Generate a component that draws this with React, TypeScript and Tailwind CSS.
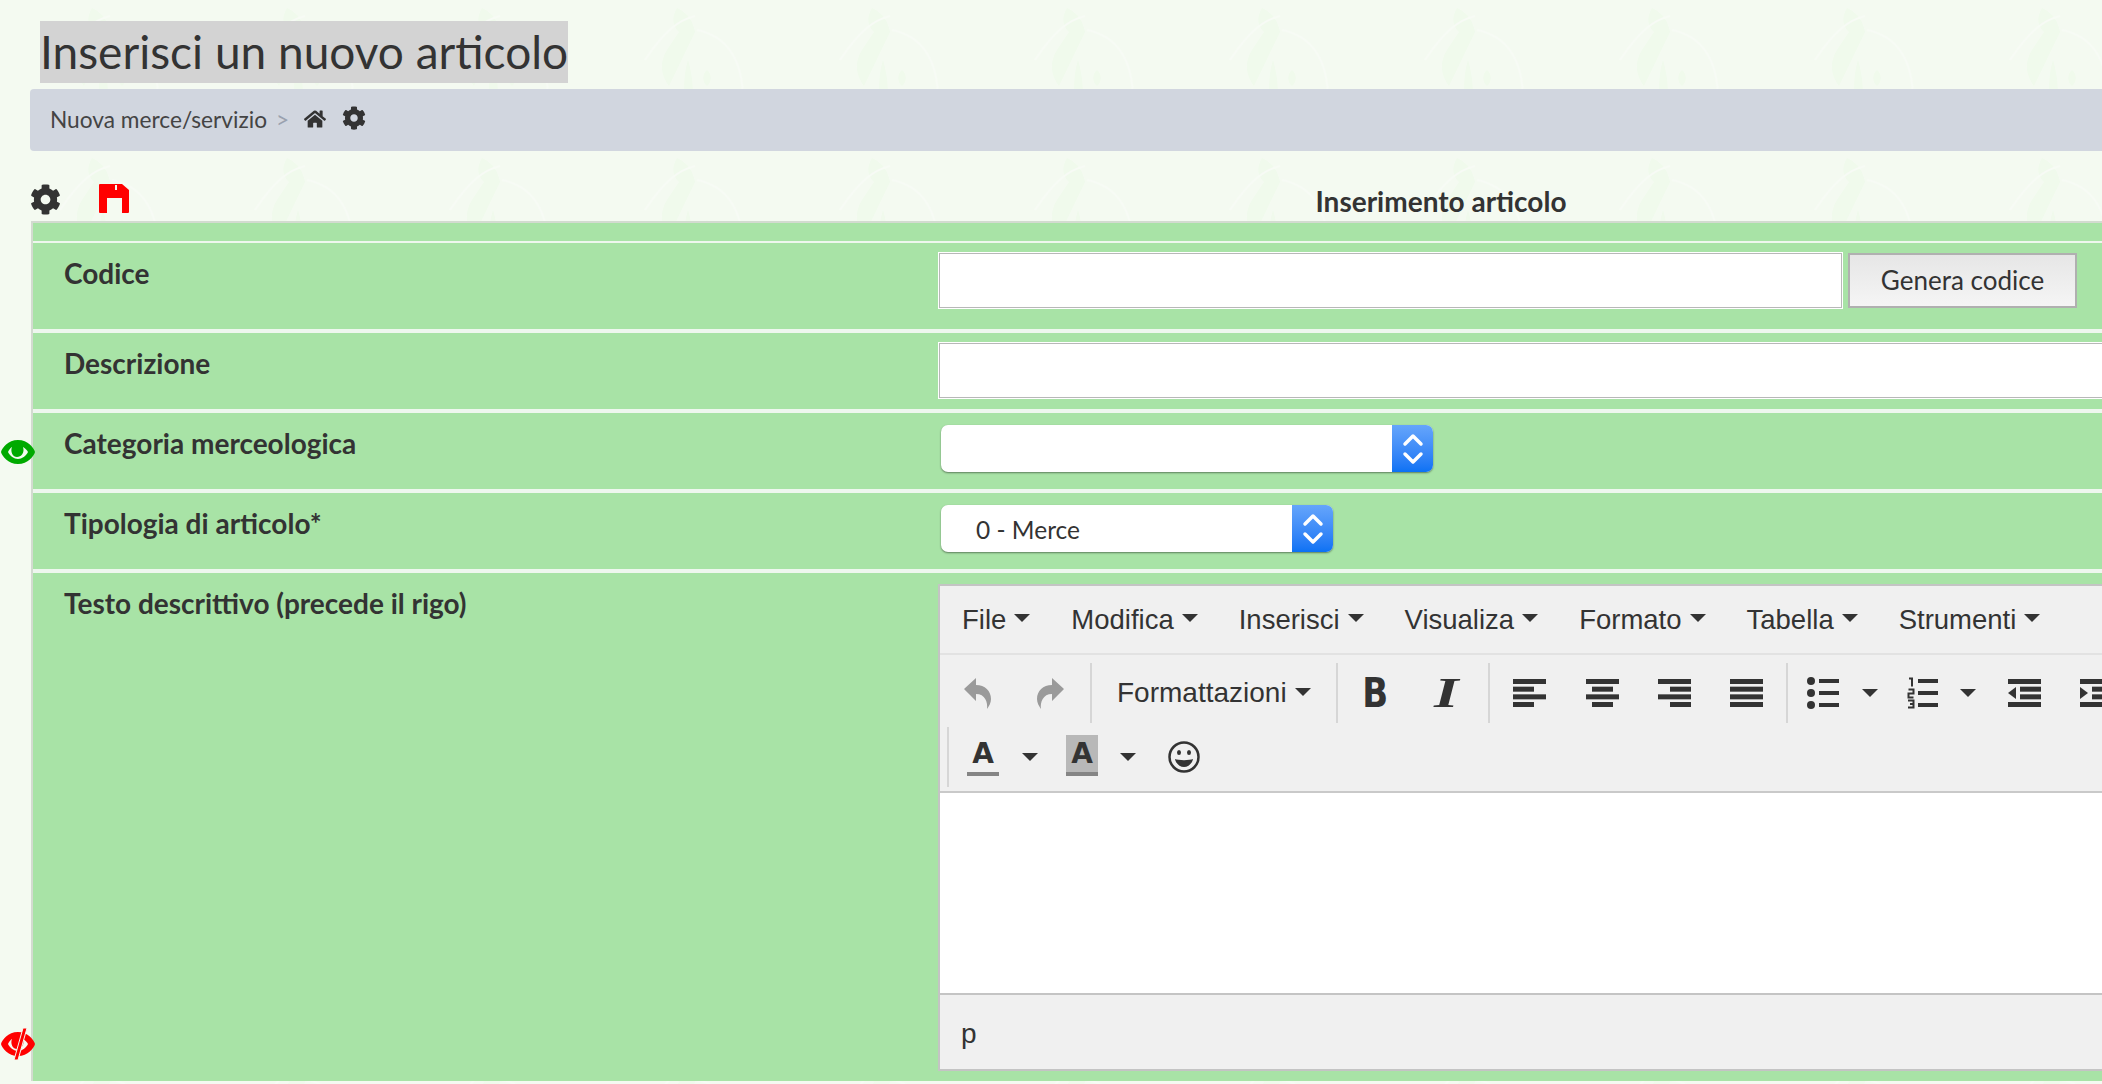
import React from "react";
import { FaCog, FaHome } from "react-icons/fa";

const Caret = ({ className = "" }: { className?: string }) => (
  <span className={`inline-block w-0 h-0 shrink-0 border-x-[8px] border-x-transparent border-t-[8px] border-t-[#333] ${className}`} />
);

const MenuItem = ({ label }: { label: string }) => (
  <span className="flex items-center">
    <span>{label}</span>
    <Caret className="ml-[8px] mb-[3px]" />
  </span>
);

const Sep = ({ className = "" }: { className?: string }) => <span className={`block w-[2px] h-[60px] bg-[#d6d6d6] shrink-0 ${className}`} />;

const Lines = ({ rows }: { rows: [number, number][] }) => (
  <svg width="33" height="28" viewBox="0 0 33 28" fill="#333" className="block">
    {rows.map(([x, w], i) => (
      <rect key={i} x={x} y={i * 7.67} width={w} height="5" />
    ))}
  </svg>
);

const Slot = ({ children, className = "w-[73px]" }: { children: React.ReactNode; className?: string }) => (
  <span className={`flex items-center justify-center shrink-0 h-[60px] ${className}`}>{children}</span>
);

const Undo = ({ flip = false }: { flip?: boolean }) => (
  <svg width="27" height="31" viewBox="0 0 27 31" fill="#9a9a9a" className={flip ? "-scale-x-100" : ""}>
    <path d="M0 11 12 0v7c9 0 15 6 15 14 0 4-2 7-4 10 1-7-2-15-11-15v7z" />
  </svg>
);

const Chevrons = () => (
  <svg width="22" height="36" viewBox="0 0 22 36" fill="none" stroke="#fff" strokeWidth="3.500" strokeLinecap="round" strokeLinejoin="round">
    <path d="M3 13 11 5l8 8M3 23l8 8 8-8" />
  </svg>
);

const SelectBox = ({ width, text }: { width: string; text?: string }) => (
  <div className={`flex h-[47px] ml-[3px] rounded-[7px] bg-white overflow-hidden shadow-[0_1px_2px_rgba(0,0,0,0.45)] ${width}`}>
    <div className="flex-1 flex items-center pl-[35px] pt-[3px] text-[24.5px] text-[#333]">{text}</div>
    <div className="w-[41px] flex items-center justify-center bg-gradient-to-b from-[#65a5fb] to-[#0a72f4]">
      <Chevrons />
    </div>
  </div>
);

const Row = ({ label, h, children }: { label: string; h: string; children: React.ReactNode }) => (
  <div className={`flex bg-[#a8e3a6] ${h}`}>
    <div className="w-[905px] shrink-0 pl-[31px] pt-[12px] text-[28px] leading-[36px] font-bold text-[#333]">{label}</div>
    <div className="flex-1 min-w-0 pt-[10px] pr-[20px]">{children}</div>
  </div>
);

const inputCls = "h-[55px] ml-[1px] bg-white border border-[#b8b8b8] shadow-[0_0_0_1px_#fff]";

export default function App() {
  return (
    <div className="relative w-full h-[1084px] overflow-hidden bg-[#f4faf1] text-[#333] font-['Lato','Noto_Sans',sans-serif]">
      <svg className="absolute inset-0 w-full h-full" aria-hidden="true">
        <defs>
          <pattern id="bgleaf" x="0" y="0" width="195" height="150" patternUnits="userSpaceOnUse">
            <g fill="#f0faec">
              <path d="M92 8c12 6 16 14 18 24l-26 54c-10-14-8-26-2-36l12-18c-6-6-8-14-2-24z" />
              <path d="M103 60c6 20 6 40 3 64-8-22-9-44-3-64z" />
              <path d="M122 70c5 4 5 12 0 16-5-4-5-12 0-16z" />
            </g>
            <path d="M112 30c30 6 46 30 46 70M150 90c-10 20-14 30-20 44M60 60c20-30 34-40 50-44" fill="none" stroke="#f7fbf5" strokeWidth="2" />
          </pattern>
        </defs>
        <rect width="100%" height="100%" fill="url(#bgleaf)" />
      </svg>

      <div className="relative">
        <div className="pt-[21px] pl-[40px]">
          <h1 className="inline-block align-top h-[62px] bg-[#d3d3d3] text-[46px] leading-[62px] font-normal whitespace-nowrap">Inserisci un nuovo articolo</h1>
        </div>

        <div className="ml-[30px] mt-[6px] h-[62px] bg-[#d1d6df] rounded-l-[4px] flex items-center pl-[20px] text-[22.7px]">
          <span className="text-[#444]">Nuova merce/servizio</span>
          <span className="ml-[9px] text-[#9aa1ae]">&gt;</span>
          <FaHome className="ml-[15px] text-[#333] mb-[3px]" size={22} />
          <FaCog className="ml-[16px] text-[#333] mb-[5px]" size={24} />
        </div>

        <div className="ml-[31px] w-[2820px] h-[70px] grid grid-cols-[1fr_auto_1fr]">
          <div className="flex items-start pt-[33px] -ml-[1px]">
            <FaCog className="text-[#333]" size={31} />
            <svg className="ml-[38px]" width="30" height="29" viewBox="0 0 30 29">
              <path
                fill="#f00"
                fillRule="evenodd"
                d="M1 0h22l7 6v22a1 1 0 0 1-1 1h-6V14H8v15H1a1 1 0 0 1-1-1V1a1 1 0 0 1 1-1zM16 1v5h2V1z"
              />
            </svg>
          </div>
          <div className="pt-[34px] text-[28px] leading-[32px] font-bold whitespace-nowrap">Inserimento articolo</div>
          <div />
        </div>

        <div className="ml-[31px] w-[2820px] border-t-2 border-l-2 border-[#d3dbd0] bg-[#eef7ee] flex flex-col">
          <div className="h-[18px] bg-[#a8e3a6]" />
          <div className="mt-[2px] flex flex-col gap-[4px]">
            <Row label="Codice" h="h-[86px]">
              <div className="flex">
                <div className={`w-[903px] ${inputCls}`} />
                <button className="ml-[6px] w-[229px] h-[55px] border-2 border-[#b0b0b0] bg-gradient-to-b from-[#e6e6e6] to-[#f5f5f5] text-[26px] text-[#333]">Genera codice</button>
              </div>
            </Row>
            <Row label="Descrizione" h="h-[76px]">
              <div className={inputCls} />
            </Row>
            <Row label="Categoria merceologica" h="h-[76px]">
              <div className="pt-[2px]">
                <SelectBox width="w-[492px]" />
              </div>
            </Row>
            <Row label="Tipologia di articolo*" h="h-[76px]">
              <div className="pt-[2px]">
                <SelectBox width="w-[392px]" text="0 - Merce" />
              </div>
            </Row>
            <Row label="Testo descrittivo (precede il rigo)" h="h-[508px]">
              <div className="mt-[1px] border-2 border-[#c4c4c4] font-['Liberation_Sans',sans-serif]">
                <div className="h-[67px] bg-[#f0f0f0] flex items-center gap-[41px] pl-[22px] text-[27.5px] text-[#333] whitespace-nowrap">
                  {["File", "Modifica", "Inserisci", "Visualiza", "Formato", "Tabella", "Strumenti"].map((m) => (
                    <MenuItem key={m} label={m} />
                  ))}
                </div>
                <div className="h-[138px] bg-[#f0f0f0] border-t-2 border-[#e2e2e2] pt-[8px]">
                  <div className="flex items-center h-[60px] pl-[1px]">
                    <Slot><Undo /></Slot>
                    <Slot><Undo flip /></Slot>
                    <Sep className="ml-[3px]" />
                    <span className="ml-[25px] text-[28px]">Formattazioni</span>
                    <Caret className="ml-[8px] mb-[3px]" />
                    <Sep className="ml-[25px]" />
                    <Slot className="w-[73px] ml-[1px]">
                      <span className="font-['DejaVu_Sans',sans-serif] font-bold text-[40px] leading-none scale-x-[0.85]">B</span>
                    </Slot>
                    <Slot className="w-[73px] -ml-[2px]">
                      <span className="font-['Liberation_Serif',serif] font-bold italic text-[42px] leading-none scale-x-[1.5]">I</span>
                    </Slot>
                    <Sep className="ml-[5px]" />
                    <Slot className="w-[72.3px] ml-[4px]"><Lines rows={[[0, 33], [0, 21], [0, 33], [0, 21]]} /></Slot>
                    <Slot className="w-[72.3px]"><Lines rows={[[0, 33], [6, 21], [0, 33], [6, 21]]} /></Slot>
                    <Slot className="w-[72.3px]"><Lines rows={[[0, 33], [12, 21], [0, 33], [12, 21]]} /></Slot>
                    <Slot className="w-[72.3px]"><Lines rows={[[0, 33], [0, 33], [0, 33], [0, 33]]} /></Slot>
                    <Sep className="ml-[3px]" />
                    <svg className="ml-[19px] shrink-0" width="32" height="32" viewBox="0 0 32 32" fill="#333">
                      <circle cx="4" cy="4" r="4" /><circle cx="4" cy="16" r="4" /><circle cx="4" cy="28" r="4" />
                      <rect x="12" y="2" width="20" height="4" /><rect x="12" y="14" width="20" height="4" /><rect x="12" y="26" width="20" height="4" />
                    </svg>
                    <Caret className="ml-[23px]" />
                    <svg className="ml-[29px] shrink-0" width="31" height="32" viewBox="0 0 31 32" fill="none" stroke="#333">
                      <path d="M2 1.500h3v8M1.500 12.500h5v4h-5v4h5M1 23.500h5.500v7H1M3 27h3" strokeWidth="2" />
                      <path d="M11 4h20M11 16h20M11 28h20" strokeWidth="4" />
                    </svg>
                    <Caret className="ml-[22px]" />
                    <svg className="ml-[32px] shrink-0" width="33" height="28" viewBox="0 0 33 28" fill="#333">
                      <rect width="33" height="5" /><rect x="12" y="7.670" width="21" height="5" /><rect x="12" y="15.340" width="21" height="5" /><rect y="23" width="33" height="5" />
                      <path d="M8 8v12L0 14z" />
                    </svg>
                    <svg className="ml-[39px] shrink-0" width="33" height="28" viewBox="0 0 33 28" fill="#333">
                      <rect width="33" height="5" /><rect x="12" y="7.670" width="21" height="5" /><rect x="12" y="15.340" width="21" height="5" /><rect y="23" width="33" height="5" />
                      <path d="M0 8v12l8-6z" />
                    </svg>
                  </div>
                  <div className="flex items-center h-[60px] mt-[4px] pl-[7px]">
                    <Sep />
                    <span className="ml-[18px] w-[32px] h-[44px] relative flex justify-center shrink-0">
                      <span className="absolute left-0 right-0 bottom-[3px] h-[4px] bg-[#858585]" />
                      <span className="font-['DejaVu_Sans',sans-serif] font-bold text-[28px] leading-[38px]">A</span>
                    </span>
                    <Caret className="ml-[23px]" />
                    <span className="ml-[28px] w-[32px] h-[44px] relative flex justify-center shrink-0">
                      <span className="absolute left-0 right-0 top-[0px] bottom-[3px] bg-[#b8b8b8]" />
                      <span className="absolute left-0 right-0 bottom-[3px] h-[4px] bg-[#858585]" />
                      <span className="relative font-['DejaVu_Sans',sans-serif] font-bold text-[28px] leading-[38px]">A</span>
                    </span>
                    <Caret className="ml-[22px]" />
                    <svg className="ml-[32px] shrink-0" width="32" height="32" viewBox="0 0 32 32">
                      <circle cx="16" cy="16" r="14.500" fill="none" stroke="#333" strokeWidth="2.500" />
                      <ellipse cx="11" cy="11.500" rx="2" ry="2.500" fill="#333" /><ellipse cx="21" cy="11.500" rx="2" ry="2.500" fill="#333" />
                      <path d="M7 18c3 1.500 15 1.500 18 0-1 5-5 8-9 8s-8-3-9-8z" fill="#333" />
                    </svg>
                  </div>
                </div>
                <div className="h-[202px] bg-white border-t-2 border-[#c9c9c9]" />
                <div className="h-[76px] bg-[#f0f0f0] border-t-2 border-[#c4c4c4] flex items-center pl-[21px] pt-[4px] text-[28px]">p</div>
              </div>
            </Row>
          </div>
        </div>
      </div>

      <svg className="absolute left-[1px] top-[440px]" width="34" height="24" viewBox="0 0 34 24">
        <path fillRule="evenodd" fill="#0a0" d="M17 0C27 0 33 8 34 12 33 16 27 24 17 24 7 24 1 16 0 12 1 8 7 0 17 0zM7 12c2 4 6 7 10 7s8-3 10-7c-1-2-3-4-5-5 2 6-2 10-6 10s-7-5-5-10c-2 1-3 3-4 5z" />
        <circle cx="14" cy="9" r="2.500" fill="#0a0" />
      </svg>
      <svg className="absolute left-[1px] top-[1028px]" width="34" height="32" viewBox="0 0 34 32">
        <path fillRule="evenodd" fill="#f00" d="M17 4C27 4 33 12 34 16 33 20 27 28 17 28 7 28 1 20 0 16 1 12 7 4 17 4zM7 16c2 4 6 7 10 7s8-3 10-7c-1-2-3-4-5-5 2 6-2 10-6 10s-7-5-5-10c-2 1-3 3-4 5z" />
        <path d="M22 0h4L17 32h-4z" fill="#f00" stroke="#f4faf1" strokeWidth="1" />
      </svg>
    </div>
  );
}
